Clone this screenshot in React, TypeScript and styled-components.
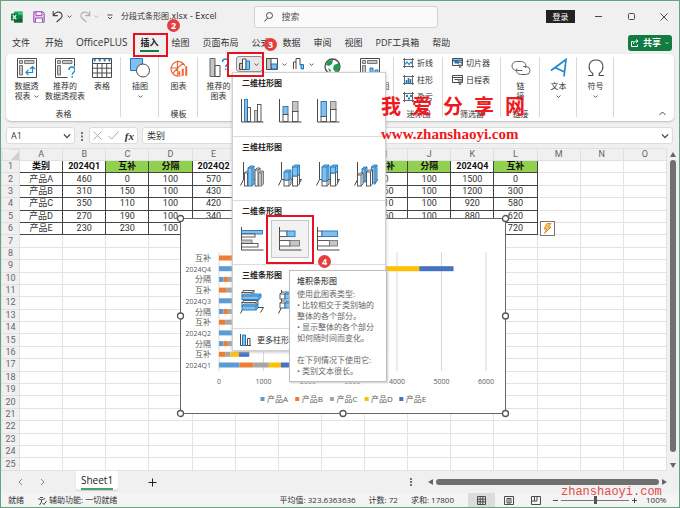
import React from "react";
import styled, { createGlobalStyle, css } from "styled-components";

const UI_FONT = `"Open Sans", "Noto Sans CJK SC", sans-serif`;
const GREEN = "#107c41";
const BLUE = "#83beec";
const BLUE_LINE = "#1e78bd";
const INK = "#4a4a4a";
const GRAY = "#c8c6c4";
const RED = "#e81123";

const Global = createGlobalStyle`
  * { box-sizing: border-box; }
  body { margin: 0; background: #fff; font-family: ${UI_FONT}; color: #333; }
  button, input { font: inherit; color: inherit; }
  button { border: 0; padding: 0; background: none; cursor: pointer; }
  svg { display: block; flex: none; }
`;

/* ---------- window frame ---------- */

const Window = styled.main`
  position: relative;
  display: flex;
  flex-direction: column;
  min-height: 100vh;
  overflow: hidden;
  border: 1px solid #62a583;
  background: #f0f0f0;
  font-size: 8px;
  line-height: 10px;
`;

const TitleBar = styled.header`
  display: flex;
  align-items: center;
  height: 31px;
  padding-left: 10px;
`;

const IconButton = styled.button<{ $gap?: number }>`
  display: flex;
  align-items: center;
  justify-content: center;
  margin-left: ${(p) => p.$gap ?? 0}px;
`;

const FileName = styled.h1`
  margin: 0 37px 0 8px;
  font-size: 8px;
  font-weight: 400;
  font-family: "DejaVu Sans", "Noto Sans CJK SC", sans-serif;
  white-space: nowrap;
`;

const SearchBox = styled.label`
  display: flex;
  align-items: center;
  gap: 9px;
  width: 184px;
  height: 22px;
  padding-left: 9px;
  border: 1px solid #d2d2d2;
  border-radius: 3px;
  background: #fafafa;
`;

const SearchInput = styled.input`
  width: 120px;
  border: 0;
  padding: 0;
  outline: 0;
  background: transparent;
  font-size: 9px;
  &::placeholder { color: #555; opacity: 1; }
`;

const TitleRight = styled.div`
  display: flex;
  flex: 1;
  align-items: center;
  justify-content: flex-end;
  padding-right: 11px;
`;

const SignIn = styled.button`
  width: 29px;
  height: 13px;
  margin-right: 20px;
  background: #222;
  color: #fff;
`;

/* ---------- ribbon ---------- */

const TabRow = styled.nav`
  display: flex;
  align-items: center;
  gap: 13px;
  height: 22px;
  padding: 0 7px 0 11px;
`;

const Tab = styled.button<{ $active?: boolean; $latin?: boolean; $first?: boolean }>`
  padding: 2px 0 1px;
  margin-right: ${(p) => (p.$first ? 2 : 0)}px;
  border-bottom: 2px solid transparent;
  font-size: ${(p) => (p.$latin ? 10 : 9)}px;
  line-height: 13px;
  color: #333;
  white-space: nowrap;
  ${(p) => p.$active && css`
    font-weight: 700;
    color: #222;
    border-color: ${GREEN};
  `}
`;

const Share = styled.button`
  display: flex;
  align-items: center;
  justify-content: center;
  gap: 4px;
  width: 44px;
  height: 16px;
  margin-left: auto;
  border-radius: 3px;
  background: ${GREEN};
  color: #fff;
  font-size: 9px;
  font-weight: 700;
  white-space: nowrap;
`;

const Ribbon = styled.section`
  display: flex;
  height: 67px;
  margin: 0 5px;
  border-radius: 5px;
  background: #fff;
  box-shadow: 0 1px 2px #bbb;
`;

const Group = styled.div<{ $w: number }>`
  position: relative;
  display: flex;
  flex: none;
  flex-direction: column;
  width: ${(p) => p.$w}px;
  &::after {
    content: "";
    position: absolute;
    right: 0;
    top: 3px;
    bottom: 4px;
    width: 1px;
    background: #d8d8d8;
  }
`;

const Items = styled.div`
  display: flex;
  justify-content: center;
  padding-top: 4px;
`;

const Stack = styled.div`
  display: flex;
  flex-direction: column;
  padding: 0 0 0 9px;
`;

const GroupName = styled.div`
  margin-top: auto;
  padding-bottom: 2px;
  text-align: center;
`;

const BigButton = styled.button<{ $w: number }>`
  display: flex;
  flex: none;
  flex-direction: column;
  align-items: center;
  gap: 3px;
  width: ${(p) => p.$w}px;
  white-space: nowrap;
  line-height: 10px;
`;

const WithArrow = styled.span`
  display: flex;
  align-items: center;
  justify-content: center;
  gap: 3px;
`;

const SmallButton = styled.button`
  display: flex;
  align-items: center;
  gap: 3px;
  height: 17px;
  white-space: nowrap;
`;

const ChartPicker = styled.button<{ $active?: boolean }>`
  display: flex;
  align-items: center;
  justify-content: center;
  gap: 4px;
  width: 27px;
  height: 16px;
  margin-top: -2px;
  border-radius: 3px;
  ${(p) => p.$active && css`
    border: 1px solid #8a8a8a;
    background: #e6e6e6;
  `}
`;

const Collapse = styled.button`
  align-self: flex-end;
  margin: 0 8px 5px auto;
`;

/* ---------- formula bar ---------- */

const FormulaRow = styled.div`
  display: flex;
  align-items: center;
  gap: 4px;
  padding: 6px 6px 4px 5px;
`;

const Box = styled.div<{ $w?: number }>`
  display: flex;
  align-items: center;
  justify-content: space-between;
  flex: ${(p) => (p.$w ? "none" : "1")};
  width: ${(p) => (p.$w ? `${p.$w}px` : "auto")};
  height: 17px;
  padding: 0 3px;
  border: 1px solid #dcdcdc;
  border-radius: 3px;
  background: #fff;
`;

const BarInput = styled.input`
  width: 40px;
  border: 0;
  padding: 0 0 0 1px;
  outline: 0;
  font-size: 9px;
  line-height: 12px;
`;

const FxLabel = styled.span`
  font-family: "Liberation Serif", serif;
  font-size: 11px;
  font-style: italic;
  font-weight: 700;
`;

/* ---------- worksheet ---------- */

const Sheet = styled.section`
  position: relative;
  display: flex;
  flex: 1;
`;

const Cells = styled.table`
  flex: 1;
  width: 100%;
  height: 323px;
  table-layout: fixed;
  border-collapse: collapse;
  background: #fff;
  font-family: Roboto, "Noto Sans CJK SC", sans-serif;
  font-size: 9px;
  line-height: 11px;
  text-align: center;
`;

const HeadCell = styled.th`
  padding: 0;
  border: 1px solid #e0e0e0;
  border-left-color: #e6e6e6;
  background: #f0f0f0;
  color: #666;
  font-weight: 400;
`;

const CornerCell = styled(HeadCell)`
  width: 18px;
  background: linear-gradient(135deg, #f0f0f0 65%, #d0d0d0 65%);
`;

const Cell = styled.td<{ $kind: "empty" | "data" | "title" | "mark" }>`
  padding: 0;
  overflow: hidden;
  border: 1px solid ${(p) => (p.$kind === "empty" ? "#e3e3e3" : "#444")};
  background: ${(p) => (p.$kind === "mark" ? "#92d050" : "#fff")};
  font-weight: ${(p) => (p.$kind === "title" || p.$kind === "mark" ? 700 : 400)};
  color: ${(p) => (p.$kind === "data" ? "#333" : "#111")};
  white-space: nowrap;
`;

const VScroll = styled.div`
  display: flex;
  flex: none;
  flex-direction: column;
  align-items: center;
  gap: 3px;
  width: 12px;
  padding: 4px 0 3px;
`;

const VThumb = styled.div`
  width: 6px;
  height: 292px;
  border-radius: 3px;
  background: #707070;
`;

const ChartObject = styled.figure`
  position: absolute;
  left: 175px;
  top: 66px;
  margin: 0;
`;

const FlashButton = styled.button`
  position: absolute;
  left: 539px;
  top: 73px;
  display: flex;
  align-items: center;
  justify-content: center;
  width: 15px;
  height: 15px;
  border: 1px solid #777;
  background: #fff;
`;

/* ---------- bottom bars ---------- */

const SheetTabs = styled.div`
  display: flex;
  align-items: center;
  height: 22px;
  padding: 0 12px 0 17px;
`;

const SheetTab = styled.button`
  align-self: flex-start;
  height: 19px;
  margin: 0 30px 0 31px;
  padding: 0 5px;
  border-radius: 0 0 3px 3px;
  background: #fff;
  box-shadow: 0 1px 1px #ccc;
  font-size: 10px;
  font-weight: 400;
  line-height: 16px;
  color: #222;
  & > span { display: block; border-bottom: 2px solid #4ea072; }
`;

const HScroll = styled.div`
  display: flex;
  align-items: center;
  gap: 3px;
  margin-left: 15px;
`;

const HThumb = styled.div`
  width: 223px;
  height: 6px;
  border-radius: 3px;
  background: #707070;
`;

const Spacer = styled.div`
  flex: 1;
`;

const StatusBar = styled.footer`
  display: flex;
  align-items: center;
  height: 14px;
  padding: 0 12px 0 7px;
  background: #f4f4f4;
  white-space: nowrap;
`;

const StatusText = styled.span<{ $right: number }>`
  margin-right: ${(p) => p.$right}px;
`;

const ViewButton = styled.button<{ $active?: boolean }>`
  display: flex;
  align-items: center;
  justify-content: center;
  width: 27px;
  height: 14px;
  background: ${(p) => (p.$active ? "#dcdcdc" : "transparent")};
`;

const Zoom = styled.input`
  appearance: none;
  width: 68px;
  height: 9px;
  margin: 0 3px;
  background: linear-gradient(#777, #777) center / 100% 1px no-repeat;
  &::-webkit-slider-thumb {
    appearance: none;
    width: 3px;
    height: 8px;
    background: #555;
  }
`;

const ZoomValue = styled.span`
  width: 21px;
  margin-left: 9px;
`;

/* ---------- chart menu and tooltip ---------- */

const Menu = styled.div`
  position: absolute;
  left: 231px;
  top: 71px;
  width: 154px;
  border: 1px solid #d0d0d0;
  background: #fff;
  box-shadow: 0 1px 3px #bbb;
`;

const MenuSection = styled.section`
  height: 64px;
  padding-top: 5px;
  border-bottom: 1px solid #dcdcdc;
`;

const MenuTitle = styled.h2`
  margin: 0 0 4px 9px;
  font-size: 8px;
  font-weight: 700;
  line-height: 10px;
  color: #222;
`;

const MenuRow = styled.div`
  display: flex;
`;

const MenuItem = styled.button<{ $active?: boolean }>`
  display: flex;
  align-items: center;
  justify-content: center;
  width: 38px;
  height: 38px;
  border: 1px solid ${(p) => (p.$active ? "#c6c6c6" : "transparent")};
  background: ${(p) => (p.$active ? "#f2f2f2" : "transparent")};
`;

const MoreItem = styled.button`
  display: flex;
  align-items: center;
  gap: 6px;
  height: 21px;
  padding-left: 7px;
`;

const Tooltip = styled.div`
  position: absolute;
  left: 288px;
  top: 269px;
  width: 98px;
  height: 112px;
  padding: 4px 0 0 7px;
  border: 1px solid #bdbdbd;
  background: #fff;
  box-shadow: 1px 1px 2px #ccc;
  line-height: 11px;
  color: #666;
  white-space: nowrap;
  & > strong { display: block; margin-bottom: 2px; font-weight: 500; color: #444; }
  & > p { margin: 0 0 11px; }
`;

/* ---------- annotations ---------- */

const Frame = styled.div<{ $x: number; $y: number; $w: number; $h: number }>`
  position: absolute;
  left: ${(p) => p.$x}px;
  top: ${(p) => p.$y}px;
  width: ${(p) => p.$w}px;
  height: ${(p) => p.$h}px;
  border: 2px solid ${RED};
  pointer-events: none;
`;

const Badge = styled.span<{ $x: number; $y: number }>`
  position: absolute;
  left: ${(p) => p.$x}px;
  top: ${(p) => p.$y}px;
  width: 13px;
  height: 13px;
  border-radius: 50%;
  background: #e53e3e;
  color: #fff;
  font-size: 9px;
  font-weight: 700;
  line-height: 13px;
  text-align: center;
`;

const Banner = styled.div`
  position: absolute;
  left: 380px;
  top: 93px;
  display: flex;
  gap: 11px;
  color: #f01820;
  font-size: 20px;
  font-weight: 700;
  line-height: 26px;
`;

const SiteLink = styled.a<{ $x: number; $y: number; $mono?: boolean }>`
  position: absolute;
  left: ${(p) => p.$x}px;
  top: ${(p) => p.$y}px;
  color: ${(p) => (p.$mono ? "#e24a4a" : "#f01820")};
  font-family: ${(p) => (p.$mono ? `"Liberation Mono", monospace` : `"Liberation Serif", serif`)};
  font-size: ${(p) => (p.$mono ? 12 : 15)}px;
  font-weight: ${(p) => (p.$mono ? 400 : 700)};
  line-height: 16px;
  text-decoration: none;
`;

/* ---------- icons ---------- */

const Svg = ({ w, h, children }: { w: number; h: number; children: React.ReactNode }) => (
  <svg width={w} height={h} viewBox={`0 0 ${w} ${h}`} fill="none" stroke={INK} strokeWidth="1" aria-hidden="true">
    {children}
  </svg>
);

const Chevron = ({ color = "#444", w = 5 }: { color?: string; w?: number }) => (
  <svg width={w} height={w} viewBox="0 0 6 6" fill="none" stroke={color} strokeWidth="1" aria-hidden="true">
    <path d="M.7 1.8 3 4.2 5.3 1.8" />
  </svg>
);

const ExcelLogo = () => (
  <svg width="12" height="12" viewBox="0 0 12 12" aria-hidden="true">
    <rect x="3" y="0.5" width="8.5" height="11" rx=".6" fill="#21a366" />
    <path d="M7.3.5h4.2v3.6H7.3z" fill="#33c481" />
    <path d="M3 8h8.500v3.500H3z" fill="#185c37" />
    <path d="M7.300 4.200h4.200V8H7.300z" fill="#107c41" />
    <rect x="0" y="2.600" width="7" height="7" rx=".6" fill="#107c41" />
    <path d="m1.800 4.200 3.400 3.900M5.200 4.200 1.800 8.100" stroke="#fff" strokeWidth="1.200" />
  </svg>
);

const SaveIcon = () => (
  <svg width="12" height="12" viewBox="0 0 12 12" fill="#e6c9ee" stroke="#9a4db0" aria-hidden="true">
    <path d="M.8.8h9l1.400 1.400v9H.8z" />
    <path d="M3 .8h5.800v3.600H3zM2.600 11.200V7h6.800v4.200" fill="#fff" />
  </svg>
);

const Undo = ({ color, flip }: { color: string; flip?: boolean }) => (
  <svg width="12" height="13" viewBox="0 0 12 13" fill="none" stroke={color} strokeWidth="1.100" aria-hidden="true">
    <g transform={flip ? "translate(12 0) scale(-1 1)" : undefined}>
      <path d="M1.200 1v4.600h4.600M1.400 5.400C3 3 5 1.600 7.200 2.100c3 .7 3.700 3.900 1.900 5.900L4.600 12" />
    </g>
  </svg>
);

const PivotIcon = ({ mark }: { mark?: "arrow" | "question" | "bars" }) => (
  <Svg w={20} h={20}>
    <path d="M.5.500h19v19H.5z" fill="#fff" />
    <path d="M2.500 2.500h3v3h-3zM7.500 2.500h9.500v3H7.500zM2.500 7.500h3v9.500h-3z" fill={GRAY} stroke="#777" />
    {mark === "arrow" && (
      <path d="M9 14.500h6.500V9M11.500 12 9 14.500l2.500 2.500M13 11l2.500-2.500L18 11" stroke="#1e88d2" strokeWidth="1.200" />
    )}
    {mark === "question" && (
      <>
        <path d="M12.500 8.500H20V20h-7.500z" fill="#fff" stroke="none" />
        <path d="M14 12c0-4 6-4 6 0 0 2.200-2.800 2.300-2.800 4.700M17.200 18v1.700" stroke="#1e88d2" strokeWidth="1.400" />
      </>
    )}
    {mark === "bars" && <path d="M10 10h3v8h-3zM15 12h3v6h-3z" fill={BLUE} stroke={BLUE_LINE} />}
  </Svg>
);

const TableIcon = () => (
  <Svg w={20} h={20}>
    <path d="M.5.500h19v19H.5zM.5 5.500h19M.5 10.200h19M.5 15h19M5.300 5.500v14M10 5.500v14M14.700 5.500v14" fill="#fff" />
    <path d="M1 1h18v3.500H1z" fill="#fff" stroke="none" />
    <path d="M1 1.200h3.400L2.700 4zM6 1.200h3.400L7.700 4zM11 1.200h3.400L12.700 4zM15.700 1.200H19L17.300 4z" fill="#1e78bd" stroke="none" />
  </Svg>
);

const ShapesIcon = () => (
  <Svg w={20} h={20}>
    <path d="M.5.500h12v12H.5z" fill={BLUE} stroke={BLUE_LINE} />
    <circle cx="13" cy="12.500" r="6.500" fill="#fff" />
  </Svg>
);

const TemplateIcon = () => (
  <Svg w={18} h={20}>
    <path d="M7.500 2.500v15M7.500 10H.8M7.500 10l6-5M13.500 16A7.300 7.300 0 1 1 15 8M8 10 3 15" stroke="#e8693a" strokeWidth="1.200" />
    <path d="M8 13h2.500v5H8zM11.500 10.500H14V18h-2.500zM15 8h2.500v10H15z" fill="#f0642d" stroke="#fff" strokeWidth=".5" />
  </Svg>
);

const RecommendIcon = () => (
  <Svg w={20} h={20}>
    <path d="M1 .500h5v18H1z" fill={GRAY} stroke="#666" />
    <path d="M6 7.500h5v11H6z" fill="#fff" />
    <path d="M13.500 4c0-4 6-4 6 0 0 2.500-2.800 2.700-2.800 5M16.700 10.500V12" stroke="#1e88d2" strokeWidth="1.400" />
  </Svg>
);

const MiniColumns = () => (
  <Svg w={11} h={12}>
    <path d="M.5 5.500h3v6h-3z" fill={GRAY} />
    <path d="M3.500 1h3.500v10.500H3.500z" fill="#fff" />
    <path d="M7 3h3.500v8.500H7z" fill={BLUE} stroke={BLUE_LINE} />
  </Svg>
);

const MoreIcon = () => (
  <Svg w={11} h={12}>
    <path d="M.5 0v11.500H11" />
    <path d="M2.500 1h3v10.500h-3z" fill={BLUE} stroke={BLUE_LINE} />
    <path d="M7.500 4.500h2.500v7H7.500z" fill="#fff" />
  </Svg>
);

const MiniTree = () => (
  <Svg w={12} h={12}>
    <path d="M.5.500h11v11H.5z" fill="#fff" />
    <path d="M5 6h6v5H5z" fill={BLUE} stroke={BLUE_LINE} />
    <path d="M.5.500H5v11H.5z" fill={GRAY} />
  </Svg>
);

const MiniWaterfall = () => (
  <Svg w={12} h={12}>
    <path d="M.5 11V4h2.500v7M3 4V.500h4V7h2" />
    <path d="M8 6.500h2.500V11H8z" fill={BLUE} stroke={BLUE_LINE} />
  </Svg>
);

const Globe = () => (
  <Svg w={17} h={17}>
    <circle cx="8.500" cy="8.500" r="7.500" fill="#fff" strokeWidth="1.300" />
    <path d="M4 2.500 9 2 8 6 5 8 2 7zM10 7l5-2 1 5-4 5-3-4zM4 10l3 2-1 3z" fill="#1f9a52" stroke="none" />
  </Svg>
);

const Spark = ({ kind }: { kind: "line" | "bar" | "win" }) => (
  <Svg w={11} h={10}>
    <path d="M0 1.500h11M1.500 0v10M9.500 0v10M0 8.500h11" stroke="#666" />
    {kind === "line" && <path d="M2 6.500 4 4l2 2.500L8 4l1.500 2" stroke="#1e88d2" strokeWidth="1.200" />}
    {kind === "bar" && <path d="M3.500 8V5M5.500 8V3M7.500 8V4" stroke="#1e78bd" strokeWidth="1.600" />}
    {kind === "win" && <path d="M3 4h2M7 4h2M5 6.500h2" stroke="#1e78bd" strokeWidth="2" />}
  </Svg>
);

const SlicerIcon = ({ blue }: { blue?: boolean }) => (
  <Svg w={11} h={10}>
    <path d="M.5.500h10v7H.5z" fill="#fff" />
    <path d="M1 2.500h9M2.500 4.500h4" stroke={blue ? "#1e78bd" : INK} strokeWidth={blue ? 2 : 1} />
    <path d="M5.500 4.500h5L8.700 7v2.500H7.400V7z" fill={blue ? "#fff" : GRAY} strokeWidth=".8" />
  </Svg>
);

const LinkIcon = () => (
  <Svg w={20} h={20}>
    <path d="M8 12.500H5.500a4.500 4.500 0 0 1 0-9h5a4.500 4.500 0 0 1 4 6.500" stroke="#666" />
    <path d="M12 8.500h3a4 4 0 0 1 0 8H9.500A4 4 0 0 1 6 10.500M8 12.500h3.500" stroke="#666" />
  </Svg>
);

const TextArtIcon = () => (
  <Svg w={18} h={20}>
    <path d="M1 12.500 16 1.500 14 18.500M5 9.500l9.500 4.500" stroke="#1e88d2" strokeWidth="1.700" />
  </Svg>
);

const OmegaIcon = () => (
  <Svg w={18} h={20}>
    <path d="M1 17.500h4.800v-2C0 11 1 2 9 2s9 9 3.200 13.500v2H17" strokeWidth="1.100" />
  </Svg>
);

/* ---------- chart type thumbnails ---------- */

type Bar = [number, number, number, number, "b" | "w" | "g"];
const FILLS = { b: BLUE, w: "#fff", g: GRAY };
const LINES = { b: BLUE_LINE, w: INK, g: "#777" };

const Thumb = ({ bars, depth = 0 }: { bars: Bar[]; depth?: number }) => (
  <Svg w={24} h={26}>
    <path d={depth ? "M3.500 0v17.500L.5 23.500M3.500 17.500h20l-3 5" : "M1.500 1v23h22"} />
    {bars.map(([x, y, w, h, k], i) => (
      <g key={i} fill={FILLS[k]} stroke={LINES[k]} strokeWidth=".9">
        {depth > 0 && (
          <path d={`M${x} ${y}l${depth} ${-depth}h${w}v${h}l${-depth} ${depth}M${x + w} ${y}l${depth} ${-depth}`} />
        )}
        <rect x={x} y={y} width={w} height={h} />
      </g>
    ))}
  </Svg>
);

const THUMBS: { title: string; depth: number; items: { name: string; bars: Bar[] }[] }[] = [
  {
    title: "二维柱形图",
    depth: 0,
    items: [
      { name: "簇状柱形图", bars: [[4.5, 1.5, 3, 22, "b"], [7.5, 9.500, 3, 14, "w"], [14.500, 12.500, 3, 11, "g"], [17.500, 6.500, 3.500, 17, "w"]] },
      { name: "堆积柱形图", bars: [[5, 8.500, 5, 8, "b"], [5, 16.500, 5, 7, "w"], [14.500, 3.500, 5.500, 10, "g"], [14.500, 13.500, 5.500, 10, "w"]] },
      { name: "百分比堆积柱形图", bars: [[5, 3.500, 5.500, 15, "b"], [5, 18.500, 5.500, 5, "w"], [14.500, 3.500, 5.500, 8, "g"], [14.500, 11.500, 5.500, 12, "w"]] },
    ],
  },
  {
    title: "三维柱形图",
    depth: 2,
    items: [
      { name: "三维簇状柱形图", bars: [[4.500, 11, 3, 13, "w"], [8, 6, 4, 18, "b"], [15, 8, 3, 16, "w"], [18.500, 11, 3, 13, "g"]] },
      { name: "三维堆积柱形图", bars: [[6, 18, 5, 6, "w"], [6, 10, 5, 8, "b"], [14.500, 14, 5, 10, "w"], [14.500, 5, 5, 9, "b"]] },
      { name: "三维百分比堆积柱形图", bars: [[6, 19, 5, 5, "w"], [6, 5, 5, 14, "b"], [14.500, 11, 5, 13, "w"], [14.500, 5, 5, 6, "b"]] },
      { name: "三维柱形图", bars: [[8, 7, 3, 13, "b"], [17.500, 5, 3.500, 16, "b"], [3.500, 13, 3.500, 11, "w"], [12.500, 10, 4, 14, "w"]] },
    ],
  },
  {
    title: "二维条形图",
    depth: 0,
    items: [
      { name: "簇状条形图", bars: [[1.500, 4.500, 21, 3.500, "b"], [1.500, 8, 13.500, 3, "w"], [1.500, 14, 10.500, 3.500, "g"], [1.500, 17.500, 16.500, 3.500, "w"]] },
      { name: "堆积条形图", bars: [[1.500, 5, 7.500, 5.500, "w"], [9, 5, 8, 5.500, "b"], [1.500, 14.500, 10.500, 5.500, "w"], [12, 14.500, 9.500, 5.500, "g"]] },
      { name: "百分比堆积条形图", bars: [[1.500, 5, 4.500, 5.500, "w"], [6, 5, 15.500, 5.500, "b"], [1.500, 14.500, 12, 5.500, "w"], [13.500, 14.500, 8, 5.500, "g"]] },
    ],
  },
  {
    title: "三维条形图",
    depth: 2,
    items: [
      { name: "三维簇状条形图", bars: [[2, 2.500, 10, 3.500, "w"], [2, 6, 17, 3.500, "b"], [2, 12.500, 14, 3.500, "w"], [2, 16, 14, 4, "b"]] },
      { name: "三维堆积条形图", bars: [[2, 4, 5, 5, "w"], [7, 4, 13, 5, "b"], [2, 13, 5, 5, "w"], [7, 13, 13, 5, "b"]] },
      { name: "三维百分比堆积条形图", bars: [[2, 4, 8, 5, "w"], [10, 4, 10, 5, "b"], [2, 13, 5, 5, "w"], [7, 13, 13, 5, "b"]] },
    ],
  },
];

/* ---------- data ---------- */

const HEADERS = ["类别", "2024Q1", "互补", "分隔", "2024Q2", "互补", "分隔", "2024Q3", "互补", "分隔", "2024Q4", "互补"];
const ROWS: [string, ...number[]][] = [
  ["产品A", 460, 0, 100, 570, 0, 100, 820, 0, 100, 1500, 0],
  ["产品B", 310, 150, 100, 430, 140, 100, 660, 160, 100, 1200, 300],
  ["产品C", 350, 110, 100, 420, 150, 100, 610, 210, 100, 920, 580],
  ["产品D", 270, 190, 100, 340, 230, 100, 560, 260, 100, 880, 620],
  ["产品E", 230, 230, 100, 300, 270, 100, 480, 340, 100, 770, 720],
];
const LETTERS = "ABCDEFGHIJKLMNO".split("");
const SERIES = ["#5b9bd5", "#ed7d31", "#a5a5a5", "#ffc000", "#4472c4"];

const ZERO_X = 43;
const PER_UNIT = 0.0445;

const Chart = () => (
  <svg width="334" height="204" viewBox="0 0 334 204" fontFamily={UI_FONT} fill="#595959" role="img" aria-label="堆积条形图">
    <rect x="4.500" y="4.500" width="325" height="195" fill="#fff" stroke="#666" />
    {[0, 1, 2, 3, 4, 5, 6].map((n) => (
      <g key={n}>
        <path d={`M${ZERO_X + n * 44.5} 38v119`} stroke="#d9d9d9" />
        <text x={ZERO_X + n * 44.5} y="170" fontSize="7" textAnchor="middle">{n * 1000}</text>
      </g>
    ))}
    {HEADERS.slice(1).map((name, i) => {
      const y = 151 - i * 10.7;
      let x = ZERO_X;
      return (
        <g key={i}>
          <text x="35" y={y + 3} fontSize={name.startsWith("2") ? 7 : 8} textAnchor="end">{name}</text>
          {ROWS.map((row, s) => {
            const w = (row[i + 1] as number) * PER_UNIT;
            const start = x;
            x += w;
            return <rect key={s} x={start} y={y - 2.5} width={w} height="5" fill={SERIES[s]} />;
          })}
        </g>
      );
    })}
    {ROWS.map((row, s) => (
      <g key={s}>
        <rect x={84.5 + s * 34.7} y="183" width="4" height="4" fill={SERIES[s]} />
        <text x={91 + s * 34.7} y="188" fontSize="8">{row[0]}</text>
      </g>
    ))}
    {[[4.5, 4.5], [167, 4.5], [329.5, 4.5], [4.5, 102], [329.5, 102], [4.5, 199.5], [167, 199.5], [329.5, 199.5]].map(([x, y]) => (
      <circle key={`${x}-${y}`} cx={x} cy={y} r="3" fill="#fff" stroke="#555" strokeWidth="1.300" />
    ))}
  </svg>
);

const kindOf = (row: number, col: number) => {
  if (row > 5 || col > 11) return "empty" as const;
  if (row > 0) return "data" as const;
  return HEADERS[col] === "互补" || HEADERS[col] === "分隔" ? ("mark" as const) : ("title" as const);
};

const textOf = (row: number, col: number) => {
  if (row > 5 || col > 11) return "";
  return row === 0 ? HEADERS[col] : ROWS[row - 1][col];
};

const TABS = ["文件", "开始", "OfficePLUS", "插入", "绘图", "页面布局", "公式", "数据", "审阅", "视图", "PDF工具箱", "帮助"];

export default function App() {
  return (
    <Window>
      <Global />
      <TitleBar>
        <ExcelLogo />
        <IconButton $gap={10} aria-label="保存"><SaveIcon /></IconButton>
        <IconButton $gap={7} aria-label="撤消"><Undo color="#444" /></IconButton>
        <IconButton $gap={3} aria-label="撤消列表"><Chevron /></IconButton>
        <IconButton $gap={7} aria-label="恢复"><Undo color="#b0b0b0" flip /></IconButton>
        <IconButton $gap={3} aria-label="恢复列表"><Chevron color="#b0b0b0" /></IconButton>
        <IconButton $gap={8} aria-label="自定义快速访问工具栏">
          <Svg w={6} h={6}><path d="M.5 1h5M1 3l2 2 2-2" /></Svg>
        </IconButton>
        <FileName>分段式条形图.xlsx - Excel</FileName>
        <SearchBox>
          <Svg w={9} h={10}><circle cx="5.500" cy="3.500" r="3" /><path d="M3.500 6 .5 9.500" /></Svg>
          <SearchInput aria-label="搜索" placeholder="搜索" />
        </SearchBox>
        <TitleRight>
          <SignIn>登录</SignIn>
          <IconButton aria-label="最小化"><Svg w={7} h={7}><path d="M0 3.500h7" /></Svg></IconButton>
          <IconButton $gap={26} aria-label="最大化"><Svg w={7} h={7}><rect x=".5" y=".5" width="6" height="6" rx="1" /></Svg></IconButton>
          <IconButton $gap={25} aria-label="关闭"><Svg w={8} h={8}><path d="m.5.500 7 7M7.500.500l-7 7" /></Svg></IconButton>
        </TitleRight>
      </TitleBar>

      <TabRow>
        {TABS.map((name, i) => (
          <Tab key={name} $active={name === "插入"} $latin={name === "OfficePLUS"} $first={i === 0}>{name}</Tab>
        ))}
        <Share>
          <svg width="8" height="8" viewBox="0 0 8 8" fill="none" stroke="#fff" aria-hidden="true">
            <path d="M2.500 2.500h-2v5h6V5.500M2.500 5c0-2 1-3 4-3M5 .500 7 2 5 3.700" />
          </svg>
          共享
          <Chevron color="#fff" w={4} />
        </Share>
      </TabRow>

      <Ribbon>
        <Group $w={115}>
          <Items>
            <BigButton $w={35}>
              <PivotIcon mark="arrow" />
              <span>数据透<WithArrow>视表<Chevron /></WithArrow></span>
            </BigButton>
            <BigButton $w={42}><PivotIcon mark="question" /><span>推荐的<br />数据透视表</span></BigButton>
            <BigButton $w={32}><TableIcon /><span>表格</span></BigButton>
          </Items>
          <GroupName>表格</GroupName>
        </Group>
        <Group $w={38}>
          <Items><BigButton $w={32}><ShapesIcon /><span>插图</span><Chevron /></BigButton></Items>
        </Group>
        <Group $w={39}>
          <Items><BigButton $w={32}><TemplateIcon /><span>图表</span></BigButton></Items>
          <GroupName>模板</GroupName>
        </Group>
        <Group $w={196}>
          <Items>
            <BigButton $w={34}><RecommendIcon /><span>推荐的<br />图表</span></BigButton>
            <ChartPicker $active aria-label="插入柱形图或条形图"><MiniColumns /><Chevron /></ChartPicker>
            <ChartPicker aria-label="插入层次结构图表"><MiniTree /><Chevron /></ChartPicker>
            <ChartPicker aria-label="插入瀑布图"><MiniWaterfall /><Chevron /></ChartPicker>
            <BigButton $w={32} aria-label="地图"><Globe /></BigButton>
            <BigButton $w={42}><PivotIcon mark="bars" /><span>数据透视图</span></BigButton>
          </Items>
          <GroupName>图表</GroupName>
        </Group>
        <Group $w={49}>
          <Stack>
            <SmallButton><Spark kind="line" />折线</SmallButton>
            <SmallButton><Spark kind="bar" />柱形</SmallButton>
            <SmallButton><Spark kind="win" />盈亏</SmallButton>
          </Stack>
          <GroupName>迷你图</GroupName>
        </Group>
        <Group $w={58}>
          <Stack>
            <SmallButton><SlicerIcon blue />切片器</SmallButton>
            <SmallButton><SlicerIcon />日程表</SmallButton>
          </Stack>
          <GroupName>筛选器</GroupName>
        </Group>
        <Group $w={39}>
          <Items><BigButton $w={32}><LinkIcon /><span>链<br />接</span></BigButton></Items>
          <GroupName>链接</GroupName>
        </Group>
        <Group $w={37}>
          <Items><BigButton $w={32}><TextArtIcon /><span>文本</span><Chevron /></BigButton></Items>
        </Group>
        <Group $w={37}>
          <Items><BigButton $w={32}><OmegaIcon /><span>符号</span><Chevron /></BigButton></Items>
        </Group>
        <Collapse aria-label="折叠功能区"><Svg w={7} h={5}><path d="M.5 4 3.500 1l3 3" /></Svg></Collapse>
      </Ribbon>

      <FormulaRow>
        <Box $w={69}>
          <BarInput aria-label="名称框" defaultValue="A1" />
          <Chevron w={8} />
        </Box>
        <Svg w={6} h={10}><path d="M3 1v2M3 4.500v2M3 8v2" strokeWidth="1.500" /></Svg>
        <Box $w={49}>
          <Svg w={9} h={9}><path d="m.5.500 8 8M8.500.500l-8 8" stroke="#aaa" /></Svg>
          <Svg w={11} h={9}><path d="m.5 5 3 3L10.500.500" stroke="#aaa" /></Svg>
          <FxLabel>fx</FxLabel>
        </Box>
        <Box>
          <BarInput aria-label="编辑栏" defaultValue="类别" />
          <Chevron w={8} />
        </Box>
      </FormulaRow>

      <Sheet>
        <Cells>
          <thead>
            <tr>
              <CornerCell />
              {LETTERS.map((l) => <HeadCell key={l} scope="col">{l}</HeadCell>)}
            </tr>
          </thead>
          <tbody>
            {Array.from({ length: 25 }, (_, r) => (
              <tr key={r}>
                <HeadCell scope="row">{r + 1}</HeadCell>
                {LETTERS.map((l, c) => <Cell key={l} $kind={kindOf(r, c)}>{textOf(r, c)}</Cell>)}
              </tr>
            ))}
          </tbody>
        </Cells>
        <VScroll>
          <Svg w={6} h={5}><path d="M0 5 3 0l3 5z" fill="#666" stroke="none" /></Svg>
          <VThumb />
          <Spacer />
          <Svg w={6} h={5}><path d="M0 0h6L3 5z" fill="#666" stroke="none" /></Svg>
        </VScroll>
        <ChartObject><Chart /></ChartObject>
        <FlashButton aria-label="快速分析">
          <svg width="9" height="11" viewBox="0 0 9 11" fill="#fbc35a" stroke="#e07b1a" strokeWidth=".8" aria-hidden="true">
            <path d="M4 .500h4L5.500 4H8L1.500 10.500 3.500 6H1z" />
          </svg>
        </FlashButton>
      </Sheet>

      <SheetTabs>
        <IconButton aria-label="上一张"><Svg w={5} h={8}><path d="M4 1 1 4l3 3" stroke="#888" /></Svg></IconButton>
        <IconButton $gap={17} aria-label="下一张"><Svg w={5} h={8}><path d="m1 1 3 3-3 3" stroke="#888" /></Svg></IconButton>
        <SheetTab><span>Sheet1</span></SheetTab>
        <IconButton aria-label="新工作表"><Svg w={9} h={9}><path d="M.5 4.500h8M4.500.500v8" stroke="#222" /></Svg></IconButton>
        <Spacer />
        <Svg w={4} h={10}><path d="M2 1v2M2 4v2M2 7v2" strokeWidth="1.500" /></Svg>
        <HScroll>
          <Svg w={5} h={6}><path d="M5 0v6L0 3z" fill="#666" stroke="none" /></Svg>
          <HThumb />
          <Svg w={5} h={6}><path d="M0 0v6l5-3z" fill="#666" stroke="none" /></Svg>
        </HScroll>
      </SheetTabs>

      <StatusBar>
        <StatusText $right={13}>就绪</StatusText>
        <Svg w={10} h={9}>
          <path d="M1 2.500 4.500 4 8 2.500M4.500 4v2L2.500 9M3 1.500h3M5.500 7 7 8.500 9.500 5" />
        </Svg>
        <StatusText $right={0}>&nbsp;辅助功能: 一切就绪</StatusText>
        <Spacer />
        <StatusText $right={13}>平均值: 323.6363636</StatusText>
        <StatusText $right={13}>计数: 72</StatusText>
        <StatusText $right={14}>求和: 17800</StatusText>
        <ViewButton $active aria-label="普通">
          <Svg w={9} h={9}><path d="M.5.500h8v8h-8zM.5 3.200h8M.5 5.800h8M3.200.500v8M5.800.500v8" /></Svg>
        </ViewButton>
        <ViewButton aria-label="页面布局">
          <Svg w={10} h={9}><path d="M.5.500h9v8h-9zM3 2.500h4v4.500H3zM5 2.500V7" /></Svg>
        </ViewButton>
        <ViewButton aria-label="分页预览">
          <Svg w={10} h={9}><path d="M.5.500h9v8h-9zM.5 5H6V.500M3.500.500V5" /></Svg>
        </ViewButton>
        <IconButton $gap={4} aria-label="缩小"><Svg w={5} h={5}><path d="M0 2.500h5" /></Svg></IconButton>
        <Zoom type="range" min="0" max="200" defaultValue="100" aria-label="缩放" />
        <IconButton aria-label="放大"><Svg w={5} h={5}><path d="M0 2.500h5M2.500 0v5" /></Svg></IconButton>
        <ZoomValue>100%</ZoomValue>
      </StatusBar>

      <Menu>
        {THUMBS.map((s) => (
          <MenuSection key={s.title}>
            <MenuTitle>{s.title}</MenuTitle>
            <MenuRow>
              {s.items.map((it) => (
                <MenuItem key={it.name} $active={it.name === "堆积条形图"} aria-label={it.name}>
                  <Thumb bars={it.bars} depth={s.depth} />
                </MenuItem>
              ))}
            </MenuRow>
          </MenuSection>
        ))}
        <MoreItem><MoreIcon />更多柱形图</MoreItem>
      </Menu>

      <Tooltip role="tooltip">
        <strong>堆积条形图</strong>
        <p>
          使用此图表类型:<br />• 比较相交于类别轴的<br />整体的各个部分。<br />• 显示整体的各个部分<br />如何随时间而变化。
        </p>
        <p>在下列情况下使用它:<br />• 类别文本很长。</p>
      </Tooltip>

      <Banner>{"我爱分享网".split("").map((c) => <span key={c}>{c}</span>)}</Banner>
      <SiteLink href="#site" $x={380} $y={125}>www.zhanshaoyi.com</SiteLink>
      <SiteLink href="#site" $x={560} $y={483} $mono>zhanshaoyi.com</SiteLink>

      <Frame $x={132} $y={32} $w={35} $h={24} />
      <Frame $x={226} $y={51} $w={37} $h={25} />
      <Frame $x={265} $y={214} $w={48} $h={49} />
      <Badge $x={166} $y={18}>2</Badge>
      <Badge $x={263} $y={37}>3</Badge>
      <Badge $x={317} $y={254}>4</Badge>
    </Window>
  );
}
